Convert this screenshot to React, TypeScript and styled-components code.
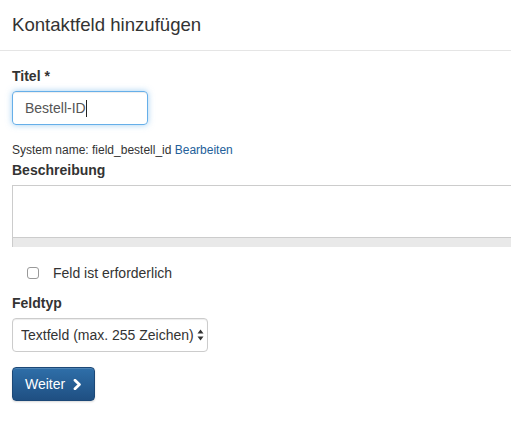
import styled, { createGlobalStyle } from "styled-components";

const GlobalStyle = createGlobalStyle`
  html, body {
    margin: 0;
    padding: 0;
    background: #fff;
    overflow: hidden;
  }
  body {
    font-family: "Liberation Sans", Arial, Helvetica, sans-serif;
    color: #333;
    font-size: 14px;
  }
`;

const App = () => {
  return (
    <>
      <GlobalStyle />
      <Modal>
        <Header>
          <Title>Kontaktfeld hinzufügen</Title>
        </Header>
        <Body>
          <Group>
            <Label>Titel *</Label>
            <TextBox>
              <span>Bestell-ID</span>
              <Caret />
            </TextBox>
          </Group>
          <SystemName>
            System name: field_bestell_id <Link href="#">Bearbeiten</Link>
          </SystemName>
          <Group $gap={1}>
            <Label>Beschreibung</Label>
            <Editor>
              <EditorArea />
              <EditorStatus />
            </Editor>
          </Group>
          <CheckRow>
            <Check type="checkbox" />
            <CheckLabel>Feld ist erforderlich</CheckLabel>
          </CheckRow>
          <Group>
            <Label>Feldtyp</Label>
            <SelectWrap>
              <Select defaultValue="text">
                <option value="text">Textfeld (max. 255 Zeichen)</option>
              </Select>
              <SelectArrows width="7" height="12" viewBox="0 0 7 12">
                <path d="M3.5 0.5 L6.5 4.5 L0.5 4.5 Z" fill="#333" />
                <path d="M3.5 11.5 L6.5 7.5 L0.5 7.5 Z" fill="#333" />
              </SelectArrows>
            </SelectWrap>
          </Group>
          <Button type="button">
            Weiter
            <svg width="9" height="11" viewBox="0 0 9 11">
              <path
                d="M2 1.2 L6.4 5.5 L2 9.8"
                fill="none"
                stroke="#fff"
                strokeWidth="2.8"
                strokeLinecap="round"
                strokeLinejoin="round"
              />
            </svg>
          </Button>
        </Body>
      </Modal>
    </>
  );
};

export default App;

const Modal = styled.div`
  width: 511px;
  min-height: 427px;
  background: #fff;
  overflow: hidden;
`;

const Header = styled.div`
  padding: 12px 12px 13px;
  border-bottom: 1px solid #e5e5e5;
`;

const Title = styled.h4`
  margin: 0;
  font-size: 18.6px;
  font-weight: 400;
  line-height: 25px;
  color: #333;
`;

const Body = styled.div`
  padding: 15px 12px 20px;
  display: flex;
  flex-direction: column;
  align-items: flex-start;
`;

const Group = styled.div<{ $gap?: number }>`
  display: flex;
  flex-direction: column;
  align-items: flex-start;
  width: 100%;
  margin-top: ${(p) => p.$gap ?? 0}px;
`;

const Label = styled.label`
  font-size: 14px;
  font-weight: 700;
  line-height: 20px;
  margin-bottom: 5px;
`;

const TextBox = styled.div`
  box-sizing: border-box;
  width: 136px;
  height: 34px;
  padding: 0 12px;
  display: flex;
  align-items: center;
  font-size: 14px;
  color: #555;
  border: 1px solid #66afe9;
  border-radius: 4px;
  box-shadow: inset 0 1px 1px rgba(0, 0, 0, 0.075),
    0 0 6px rgba(102, 175, 233, 0.6);
`;

const Caret = styled.span`
  width: 1px;
  height: 17px;
  background: #222;
`;

const SystemName = styled.div`
  margin-top: 17px;
  font-size: 12px;
  line-height: 17px;
  color: #333;
`;

const Link = styled.a`
  color: #23609a;
  text-decoration: none;
`;

const Editor = styled.div`
  box-sizing: border-box;
  width: calc(100% + 20px);
  border: 1px solid #ccc;
  border-right: none;
  border-bottom: none;
`;

const EditorArea = styled.div`
  height: 51px;
  background: #fff;
  border-bottom: 1px solid #ccc;
`;

const EditorStatus = styled.div`
  height: 9px;
  background: #e9e9e9;
`;

const CheckRow = styled.label`
  display: flex;
  align-items: center;
  margin: 16px 0 10px 15px;
  height: 20px;
`;

const Check = styled.input`
  appearance: none;
  box-sizing: border-box;
  width: 12px;
  height: 12px;
  margin: 0 14px 0 0;
  border: 1px solid #999;
  border-radius: 3px;
  background: #fff;
`;

const CheckLabel = styled.span`
  font-size: 14px;
  color: #333;
`;

const SelectWrap = styled.div`
  position: relative;
  width: 196px;
`;

const Select = styled.select`
  appearance: none;
  box-sizing: border-box;
  width: 196px;
  height: 34px;
  padding: 0 8px;
  font-family: "Liberation Sans", Arial, sans-serif;
  font-size: 14px;
  color: #333;
  background: #fff;
  border: 1px solid #ccc;
  border-radius: 4px;
  box-shadow: inset 0 1px 1px rgba(0, 0, 0, 0.075);
`;

const SelectArrows = styled.svg`
  position: absolute;
  right: 4px;
  top: 11px;
  pointer-events: none;
`;

const Button = styled.button`
  margin-top: 15px;
  box-sizing: border-box;
  height: 34px;
  padding: 0 12px 0 12px;
  display: inline-flex;
  align-items: center;
  gap: 8px;
  font-family: "Liberation Sans", Arial, sans-serif;
  font-size: 14px;
  color: #fff;
  background: linear-gradient(to bottom, #2f6fa9 0%, #1f4f82 100%);
  border: 1px solid #1c4877;
  border-radius: 4px;
  box-shadow: inset 0 1px 0 rgba(255, 255, 255, 0.15),
    0 1px 2px rgba(0, 0, 0, 0.15);
  cursor: pointer;
`;
